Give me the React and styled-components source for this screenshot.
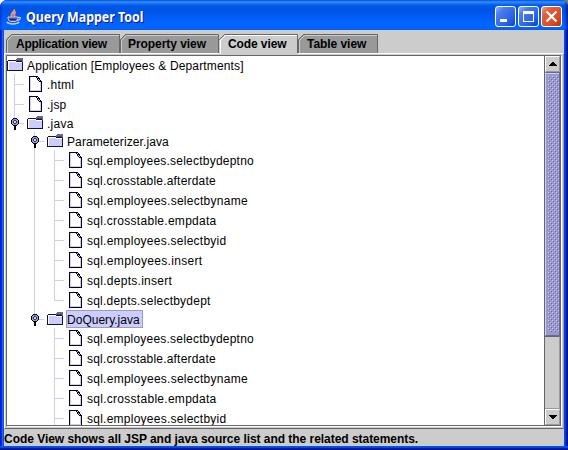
import React from 'react';
import styled, { createGlobalStyle } from 'styled-components';

const Global = createGlobalStyle`
  * { box-sizing: border-box; }
  body { margin: 0; overflow: hidden; background: linear-gradient(90deg, #fff 50%, #777 50%); font-family: "Liberation Sans", Arial, sans-serif; }
`;

const Window = styled.div`
  width: 568px;
  height: 450px;
  display: flex;
  flex-direction: column;
  background:
    linear-gradient(180deg, transparent 446px, #0455e5 446px 447px, #0048f1 447px 448px, #001ea0 448px 449px, #00138c 449px),
    linear-gradient(90deg, #0019cf 0 1px, #0831d9 1px 2px, #166aee 2px 3px, #0855dd 3px 4px, #0455e5 4px 564px, #0048f1 564px 565px, #003be0 565px 566px, #001ea0 566px 567px, #00138c 567px);
  border-radius: 7px 7px 0 0;
  overflow: hidden;
`;

const TitleBar = styled.header`
  height: 30px;
  flex: none;
  display: flex;
  align-items: center;
  padding: 3px 6px 0 6px;
  background:
    linear-gradient(90deg, #0019cf88 0, transparent 3px 564px, #00138ccc 568px),
    linear-gradient(180deg, #0050d8 0, #3a8cf8 2px, #0a6cf4 4px, #0057e5 6px, #0054e3 9px, #0055eb 13px, #005bf5 17px, #0263fe 22px, #0066ff 28px, #005cf0 30px);
`;

const Title = styled.h1`
  margin: 0 auto 0 4px;
  font: bold 14px/20px "Noto Sans", "Open Sans", sans-serif;
  transform: scaleX(0.885);
  transform-origin: left center;
  color: #fff;
  text-shadow: 1px 1px 0 #0a1883;
  white-space: nowrap;
`;

const Controls = styled.div`
  display: flex;
  gap: 2px;
`;

const ControlButton = styled.button`
  width: 21px;
  height: 21px;
  padding: 0;
  display: grid;
  place-items: center;
  border: 1px solid #fff;
  border-radius: 3px;
  background: ${p => p.$close
    ? 'linear-gradient(135deg, #f09a80 0, #e4603c 25%, #de4a22 70%, #b83208 100%)'
    : 'linear-gradient(135deg, #8eb0f8 0, #4a7cf0 25%, #2a60e4 70%, #0a44c8 100%)'};
`;

const Content = styled.main`
  flex: 1;
  min-height: 0;
  margin: 0 4px 4px;
  display: flex;
  flex-direction: column;
  background: #ccc;
`;

const Tabs = styled.nav`
  height: 23px;
  padding: 4px 0 0 2px;
  display: flex;
`;

const Tab = styled.div`
  position: relative;
  width: ${p => p.$width}px;
  height: ${p => (p.$active ? 20 : 19)}px;
  padding-left: ${p => p.$pad}px;
  font: bold 12px/21px "Liberation Sans", Arial, sans-serif;
  letter-spacing: ${p => p.$spacing}px;
  color: #000;
  white-space: nowrap;
`;

const TabShape = styled.svg`
  position: absolute;
  left: 0;
  top: 0;
`;

const TabLabel = styled.span`
  position: relative;
`;

const Pane = styled.section`
  height: 376px;
  flex: none;
  display: flex;
  padding: 1px 2px 2px 1px;
  border-top: 1px solid #fff;
  border-left: 1px solid #fff;
  border-right: 1px solid #999;
  border-bottom: 1px solid #666;
`;

const ScrollPane = styled.div`
  flex: 1;
  display: flex;
  min-width: 0;
  border: 1px solid #666;
  box-shadow: 1px 1px 0 #fff;
  background: #fff;
`;

const TreeView = styled.div`
  flex: 1;
  overflow: hidden;
`;

const Row = styled.div`
  height: ${p => (p.$kind === 'leaf' ? 20 : 18)}px;
  display: flex;
  align-items: flex-start;
`;

const Guides = styled.svg`
  display: block;
  flex: none;
`;

const RowLabel = styled.span`
  height: ${p => (p.$kind === 'leaf' ? 20 : 18)}px;
  margin-left: 1px;
  padding: 0 2px 0 ${p => (p.$selected ? 0 : 1)}px;
  border: ${p => (p.$selected ? '1px solid #9999cc' : '0')};
  background: ${p => (p.$selected ? '#ccccff' : 'transparent')};
  font-size: 12px;
  line-height: ${p => (p.$kind === 'leaf' ? 23 : p.$selected ? 19 : 21)}px;
  letter-spacing: ${p => p.$spacing}px;
  color: #000;
  white-space: nowrap;
`;

const ScrollBar = styled.div`
  width: 16px;
  flex: none;
  display: flex;
  flex-direction: column;
  border-left: 1px solid #666;
  background: #ccc;
`;

const ArrowButton = styled.div`
  height: 16px;
  flex: none;
  display: grid;
  place-items: center;
  border: 1px solid;
  border-color: #fff #999 #999 #fff;
  background: #ccc;
`;

const Thumb = styled.div`
  height: 264px;
  flex: none;
  padding: 3px 2px;
  border: 1px solid;
  border-color: #666699 #666699 #666699 #ccccff;
  box-shadow: inset 0 1px 0 #ccccff;
  background: #9999cc;
`;

const Track = styled.div`
  flex: 1;
  border: 1px solid #666;
  border-color: #666 #999 #999 #999;
  border-left: 0;
`;

const Status = styled.footer`
  flex: 1;
  padding-top: 2px;
  font-weight: bold;
  font-size: 12px;
  line-height: 16px;
  letter-spacing: ${p => p.$spacing}px;
  white-space: nowrap;
`;

const JavaCup = () => (
  <svg width="16" height="16" viewBox="0 0 16 16">
    <path d="M8 .5C9.500 3 3.500 4.500 6 7.500M9.800 3C6.500 4.500 9.500 6 8 8" fill="none" stroke="#f0956e" strokeWidth="2" />
    <path d="M2 8h10c0 2-1 4-2.500 4.500h-5C3 12 2 10.500 2 8z" fill="#5054a0" stroke="#d5d7f5" strokeWidth=".9" />
    <path d="M12 8.500c3.500-1 3 2.500-1 3" fill="none" stroke="#c8caf0" strokeWidth="1.300" />
    <path d="M.8 13c2 2.500 10 2.500 12.500 0" fill="none" stroke="#c8caf0" strokeWidth="1.500" />
    <path d="M3.500 10.500h6" stroke="#20286c" />
  </svg>
);

const MinimizeIcon = () => (
  <svg width="19" height="19"><rect x="4" y="12" width="7" height="3" fill="#fff" /></svg>
);
const MaximizeIcon = () => (
  <svg width="19" height="19"><path d="M4 4h11v11H4zM5 7v7h9V7z" fill="#fff" fillRule="evenodd" /></svg>
);
const CloseIcon = () => (
  <svg width="19" height="19"><path d="M4.500 4.500l10 10M14.500 4.500l-10 10" stroke="#fff" strokeWidth="2.300" /></svg>
);

const Folder = ({ x }) => (
  <g transform={`translate(${x} 2)`} shapeRendering="crispEdges">
    <rect x="1" y="3" width="14" height="9" fill="#ccccff" />
    <path d="M1 3h8v1H2v8H1zM9 4h6v1H9z" fill="#fff" />
    <path d="M1 2h8v1H1zM0 3h1v10H0zM0 12h16v1H0zM15 3h1v10h-1zM9 3h6v1H9z" fill="#14142c" />
    <path d="M10 0h6v4h-1V3H9V1h1z" fill="#666699" />
    <path d="M10 2h5v1h-5z" fill="#444470" />
  </g>
);

const Leaf = ({ x }) => (
  <g transform={`translate(${x} 2)`} shapeRendering="crispEdges">
    <path d="M0 0h9v1h1v1h1v2h1v1h1v11H0z" fill="#000018" />
    <path d="M1 1h6v1h1v2h1v1h1v1h2v9H1z" fill="#fff" />
    <path d="M1 14h11v1H1zM11 6h1v9h-1zM1 1h1v14H1z" fill="#ccccff" />
    <path d="M8 1h1v1H8zM9 3h1v1H9zM10 4h1v1h-1z" fill="#ccccff" />
  </g>
);

const Handle = ({ x }) => (
  <g transform={`translate(${x} 4)`} shapeRendering="crispEdges">
    <path d="M2 0h4v1h1v1h1v4H7v1H6v1H5v4H3V8H2V7H1V6H0V2h1V1h1z" fill="#000" />
    <path d="M2 1h4v1h1v4H6v1H2V6H1V2h1z" fill="#9999cc" />
    <path d="M3 2h2v1h1v2H5v1H3V5H2V3h1z" fill="#333366" />
    <rect x="3" y="3" width="2" height="2" fill="#ccccff" />
  </g>
);

// Statement keys with the letter spacing of each label.
const statements = [
  ['sql.employees.selectbydeptno', 0.22],
  ['sql.crosstable.afterdate', 0.2],
  ['sql.employees.selectbyname', 0.26],
  ['sql.crosstable.empdata', 0.28],
  ['sql.employees.selectbyid', 0.25],
  ['sql.employees.insert', 0.3],
  ['sql.depts.insert', 0.28],
  ['sql.depts.selectbydept', 0.22],
];
const leaves = (list, outer) => list.map(([text, spacing], i) => ({
  text, spacing, depth: 3, kind: 'leaf', outer, last: i === 7,
}));
const rows = [
  { text: 'Application [Employees & Departments]', depth: 0, kind: 'root', spacing: 0.14 },
  { text: '.html', depth: 1, kind: 'leaf', spacing: 0.2 },
  { text: '.jsp', depth: 1, kind: 'leaf', spacing: 0.2 },
  { text: '.java', depth: 1, kind: 'folder', spacing: 0.25, last: true },
  { text: 'Parameterizer.java', depth: 2, kind: 'folder', spacing: 0.1 },
  ...leaves(statements, true),
  { text: 'DoQuery.java', depth: 2, kind: 'folder', spacing: 0.02, selected: true, last: true },
  ...leaves(statements.slice(0, 5), false),
];

const TreeRow = ({ row }) => {
  const h = row.kind === 'leaf' ? 20 : 18;
  const mid = h === 20 ? 10 : 9;
  const icon = row.depth * 20;
  const guide = icon - 13;
  return (
    <Row $kind={row.kind}>
      <Guides width={icon + 18} height={h} shapeRendering="crispEdges">
        {row.outer && <rect x="27" y="0" width="1" height={h} fill="#ccccff" />}
        {row.depth > 0 && (
          <>
            <rect x={guide} y="0" width="1" height={row.last ? mid : h} fill="#ccccff" />
            <rect x={guide} y={mid} width="10" height="1" fill="#ccccff" />
          </>
        )}
        {row.kind === 'folder' && <Handle x={guide - 3} />}
        {row.kind === 'leaf' ? <Leaf x={icon + 2} /> : <Folder x={icon} />}
      </Guides>
      <RowLabel $kind={row.kind} $selected={row.selected} $spacing={row.spacing}>{row.text}</RowLabel>
    </Row>
  );
};

const tabs = [
  { text: 'Application view', width: 114, pad: 10, spacing: -0.24 },
  { text: 'Property view', width: 99, pad: 8, spacing: -0.06 },
  { text: 'Code view', width: 79, pad: 9, spacing: -0.1 },
  { text: 'Table view', width: 80, pad: 9, spacing: -0.05 },
];
const activeTab = 'Code view';

const TabItem = ({ tab }) => {
  const w = tab.width;
  const active = tab.text === activeTab;
  const h = active ? 20 : 19;
  return (
    <Tab $width={w} $pad={tab.pad} $spacing={tab.spacing} $active={active}>
      <TabShape width={w} height={h}>
        <path d={`M0 ${h}V6L6 0H${w}V${h}z`} fill={active ? '#ccc' : '#999'} />
        <path d={`M1.500 ${h}V6.500L6.500 1.500H${w - 1}`} fill="none" stroke={active ? '#fff' : '#ccc'} />
        <path d={`M.5 ${active ? 6 : h}V5.500L5.500 .5H${w - 0.5}V${active ? h - 1 : h}`} fill="none" stroke="#666" />
      </TabShape>
      <TabLabel>{tab.text}</TabLabel>
    </Tab>
  );
};

const Bumps = () => (
  <svg width="11" height="256" shapeRendering="crispEdges">
    <defs>
      <pattern id="bumps" width="4" height="4" patternUnits="userSpaceOnUse">
        <path d="M0 0h1v1H0zM2 2h1v1H2z" fill="#ccccff" />
        <path d="M1 1h1v1H1zM3 3h1v1H3z" fill="#666699" />
      </pattern>
    </defs>
    <rect width="11" height="256" fill="url(#bumps)" />
  </svg>
);

export default function App() {
  return (
    <>
      <Global />
      <Window>
        <TitleBar>
          <JavaCup />
          <Title>Query Mapper Tool</Title>
          <Controls>
            <ControlButton aria-label="Minimize"><MinimizeIcon /></ControlButton>
            <ControlButton aria-label="Maximize"><MaximizeIcon /></ControlButton>
            <ControlButton aria-label="Close" $close><CloseIcon /></ControlButton>
          </Controls>
        </TitleBar>
        <Content>
          <Tabs>{tabs.map(t => <TabItem key={t.text} tab={t} />)}</Tabs>
          <Pane>
            <ScrollPane>
              <TreeView>{rows.map((r, i) => <TreeRow key={i} row={r} />)}</TreeView>
              <ScrollBar>
                <ArrowButton><svg width="8" height="4" shapeRendering="crispEdges"><path d="M3 0h2v1h1v1h1v1h1v1H0V3h1V2h1V1h1z" /></svg></ArrowButton>
                <Thumb><Bumps /></Thumb>
                <Track />
                <ArrowButton><svg width="8" height="4" shapeRendering="crispEdges"><path d="M0 0h8v1H7v1H6v1H5v1H3V3H2V2H1V1H0z" /></svg></ArrowButton>
              </ScrollBar>
            </ScrollPane>
          </Pane>
          <Status $spacing={-0.04}>Code View shows all JSP and java source list and the related statements.</Status>
        </Content>
      </Window>
    </>
  );
}
